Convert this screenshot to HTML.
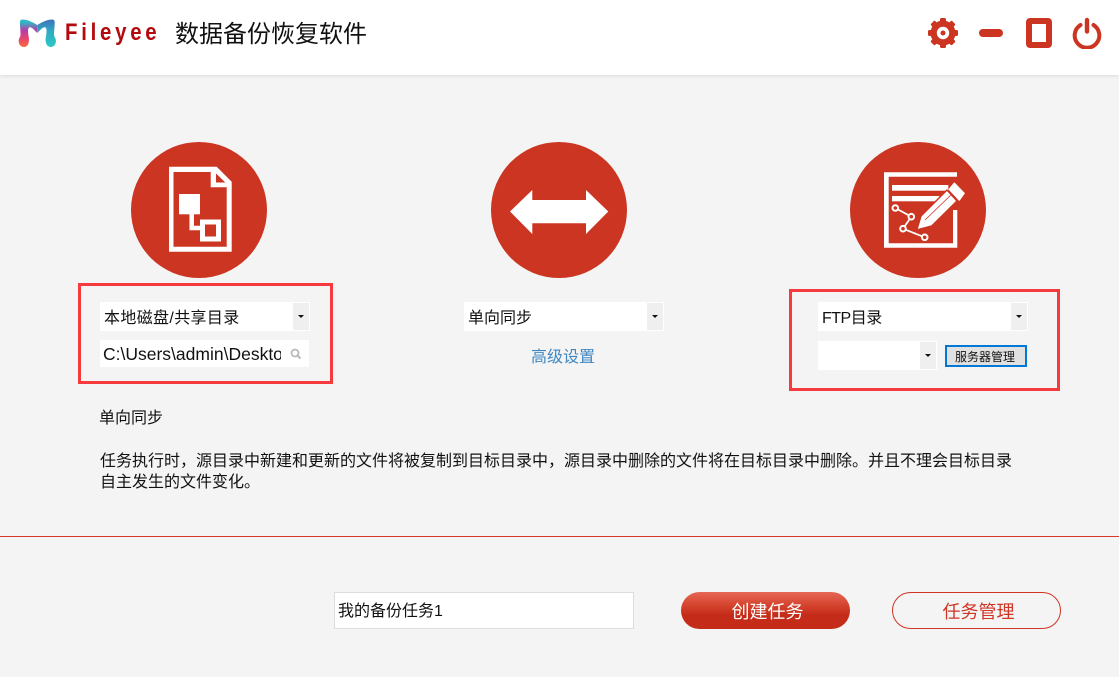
<!DOCTYPE html>
<html lang="zh">
<head>
<meta charset="utf-8">
<title>Fileyee</title>
<style>
html,body{margin:0;padding:0}
body{width:1119px;height:677px;overflow:hidden;position:relative;background:#f4f4f4;font-family:"Liberation Sans","Noto Sans CJK SC",sans-serif;color:#111;font-size:16px}
.a{position:absolute;white-space:nowrap}
.hdr{left:0;top:0;width:1119px;height:75px;background:#fff;box-shadow:0 1px 4px rgba(0,0,0,.1)}
.c{width:136px;height:136px;border-radius:50%;background:#cb3522;top:142px}
.box{border:3px solid #f63a3d;box-sizing:border-box}
.sel{background:#fff;height:29px;top:302px;line-height:33px;box-sizing:border-box;padding-left:4px}
.sel i{position:absolute;right:1px;top:1px;bottom:1px;width:16px;background:#efefef}
.sel i:after{content:"";position:absolute;left:5px;top:12px;border-style:solid;border-color:#111 transparent transparent;border-width:3px 3px 0}
.t{line-height:22px}
</style>
</head>
<body>
<div class="a hdr"></div>

<svg class="a" style="left:17px;top:18px" width="40" height="30" viewBox="0 0 40 30">
<defs>
<linearGradient id="l" x1="0" y1="1" x2="0" y2="0"><stop offset="0" stop-color="#ff6a3d"/><stop offset=".3" stop-color="#e5466f"/><stop offset=".6" stop-color="#b83aa6"/><stop offset=".9" stop-color="#2fb8c6"/></linearGradient>
<linearGradient id="r" x1="0" y1="1" x2="0" y2="0"><stop offset="0" stop-color="#2cc9c4"/><stop offset=".6" stop-color="#2fa8c4"/><stop offset="1" stop-color="#3f70b8"/></linearGradient>
</defs>
<path d="M3 3Q3.500 1.500 6 1.500C12 2 17 5 20.300 7V15C17 12 15 9 12.500 9.300C10.500 10 11 14 11.500 18C12.500 21 12.500 29 7 29C1.500 29 .5 22 3 19C4.500 16 2.500 9 3 3Z" fill="url(#l)"/>
<path d="M3 3Q3.500 1.500 6 1.500C12 2 17 5 20.300 7V15C17 12 15 9 12.500 9.300C10.500 10 11 14 11.500 18C12.500 21 12.500 29 7 29C1.500 29 .5 22 3 19C4.500 16 2.500 9 3 3Z" fill="url(#r)" transform="translate(40.600,0) scale(-1,1)"/>
</svg>
<div class="a" style="left:65px;top:19px;font-size:24px;line-height:28px;font-weight:700;letter-spacing:4.400px;color:#b30a0d;font-family:'Liberation Sans',sans-serif;transform:scaleX(.85);transform-origin:left center">Fileyee</div>
<div class="a" style="left:175px;top:18px;font-size:24px;line-height:34px;color:#111">数据备份恢复软件</div>

<svg class="a" style="left:926px;top:15px" width="36" height="36" viewBox="0 0 36 36">
<g fill="#cb3522">
<circle cx="17" cy="18" r="12.500"/>
<rect x="14" y="3" width="6" height="30" rx="1.500"/>
<rect x="14" y="3" width="6" height="30" rx="1.500" transform="rotate(45 17 18)"/>
<rect x="14" y="3" width="6" height="30" rx="1.500" transform="rotate(90 17 18)"/>
<rect x="14" y="3" width="6" height="30" rx="1.500" transform="rotate(135 17 18)"/>
</g>
<circle cx="17" cy="18" r="6.200" fill="#fff"/><circle cx="17" cy="18" r="2.500" fill="#cb3522"/>
</svg>
<div class="a" style="left:979px;top:29px;width:24px;height:8px;border-radius:4px;background:#cb3522"></div>
<div class="a" style="left:1026px;top:18px;width:26px;height:30px;box-sizing:border-box;border:6px solid #cb3522;border-radius:4px;background:#fff"></div>
<svg class="a" style="left:1072px;top:17px" width="31" height="32" viewBox="0 0 31 32">
<path d="M8.500 8A12.300 12.300 0 1 0 21.500 8" fill="none" stroke="#cb3522" stroke-width="4" stroke-linecap="round"/>
<path d="M15 3V14.500" fill="none" stroke="#cb3522" stroke-width="4.400" stroke-linecap="round"/>
</svg>

<div class="a c" style="left:131px">
<svg width="136" height="136" viewBox="0 0 136 136">
<path d="M38 24.700H85.700L100.700 39.700V109.700H38ZM42.500 30V104.700H95.700V45.300H79.700V30ZM85 31.500V40.500H94.300Z" fill="#fff" fill-rule="evenodd"/>
<rect x="48" y="52" width="21" height="20.300" fill="#fff"/>
<path d="M60.700 72V86H70" fill="none" stroke="#fff" stroke-width="4.500"/>
<rect x="71.500" y="80" width="16" height="17" fill="none" stroke="#fff" stroke-width="5"/>
</svg>
</div>

<div class="a c" style="left:491px">
<svg width="136" height="136" viewBox="0 0 136 136">
<path d="M19 69.500L41.300 48V58H95V48L117.300 69.500L95 92V81.300H41.300V92Z" fill="#fff"/>
</svg>
</div>

<div class="a c" style="left:850px">
<svg width="136" height="136" viewBox="0 0 136 136">
<path d="M34 30.300H107V34.700H38.700V101.300H103V68H107.300V105.700H34Z" fill="#fff"/>
<rect x="42" y="43" width="56.300" height="5.700" fill="#fff"/>
<rect x="42" y="54" width="47.300" height="5.300" fill="#fff"/>
<path d="M45.300 66L61.300 74.700L53 86.700L74.700 95.300" fill="none" stroke="#fff" stroke-width="1.800"/>
<g fill="#cb3522" stroke="#fff" stroke-width="2">
<circle cx="45.300" cy="66" r="2.800"/><circle cx="61.300" cy="74.700" r="2.800"/><circle cx="53" cy="86.700" r="2.800"/><circle cx="74.700" cy="95.300" r="2.800"/>
</g>
<path d="M71 74L97 48L107 59L81.700 84L66.700 88Z" fill="#fff" stroke="#cb3522" stroke-width="1.500" stroke-linejoin="round"/>
<path d="M75 78L102 52" stroke="#cb3522" stroke-width=".8"/>
<path d="M104.300 41.300L114 51.300L109.300 58L99.300 47.300Z" fill="#fff" stroke="#fff" stroke-width="1.500" stroke-linejoin="round"/>
</svg>
</div>

<div class="a box" style="left:78px;top:283px;width:255px;height:101px"></div>
<div class="a box" style="left:789px;top:289px;width:271px;height:102px"></div>

<div class="a sel" style="left:100px;width:210px;letter-spacing:.35px">本地磁盘/共享目录<i></i></div>
<div class="a" style="left:100px;top:340px;width:209px;height:27px;background:#fff"></div>
<div class="a" style="left:103px;top:341px;width:178px;overflow:hidden;line-height:26px;font-size:17.500px">C:\Users\admin\Desktop</div>
<svg class="a" style="left:290px;top:348px" width="12" height="12" viewBox="0 0 12 12"><circle cx="5" cy="5" r="3.500" fill="none" stroke="#b9b9b9" stroke-width="1.800"/><path d="M7.500 7.500L10.500 10.500" stroke="#b9b9b9" stroke-width="2"/></svg>

<div class="a sel" style="left:464px;width:200px">单向同步<i></i></div>
<div class="a" style="left:531px;top:345px;line-height:25px;color:#3f87c2">高级设置</div>

<div class="a sel" style="left:818px;width:210px;letter-spacing:-.5px">FTP目录<i></i></div>
<div class="a sel" style="left:818px;top:341px;width:119px"><i></i></div>
<div class="a" style="left:945px;top:345px;width:82px;height:22px;box-sizing:border-box;border:2px solid #0078d7;background:#e1e1e1;font-size:12px;line-height:21px;padding-right:2px;text-align:center;color:#111">服务器管理</div>

<div class="a t" style="left:99px;top:408px">单向同步</div>
<div class="a t" style="left:100px;top:451px">任务执行时，源目录中新建和更新的文件将被复制到目标目录中，源目录中删除的文件将在目标目录中删除。并且不理会目标目录</div>
<div class="a t" style="left:100px;top:472px">自主发生的文件变化。</div>

<div class="a" style="left:0;top:536px;width:1119px;height:1px;background:#d9392a"></div>

<div class="a" style="left:334px;top:592px;width:300px;height:37px;box-sizing:border-box;border:1px solid #ddd;background:#fff;padding-left:3px;line-height:37px">我的备份任务1</div>
<div class="a" style="left:681px;top:592px;width:169px;height:37px;box-sizing:border-box;padding-left:4px;border-radius:19px;background:linear-gradient(#e76655 0,#d5442f 35%,#c42c19 62%,#c42c19 100%);color:#fff;font-size:18px;line-height:40px;text-align:center">创建任务</div>
<div class="a" style="left:892px;top:592px;width:169px;height:37px;box-sizing:border-box;padding-left:4px;border:1px solid #cf3524;border-radius:19px;color:#cf3524;font-size:18px;line-height:38px;text-align:center">任务管理</div>
</body>
</html>
